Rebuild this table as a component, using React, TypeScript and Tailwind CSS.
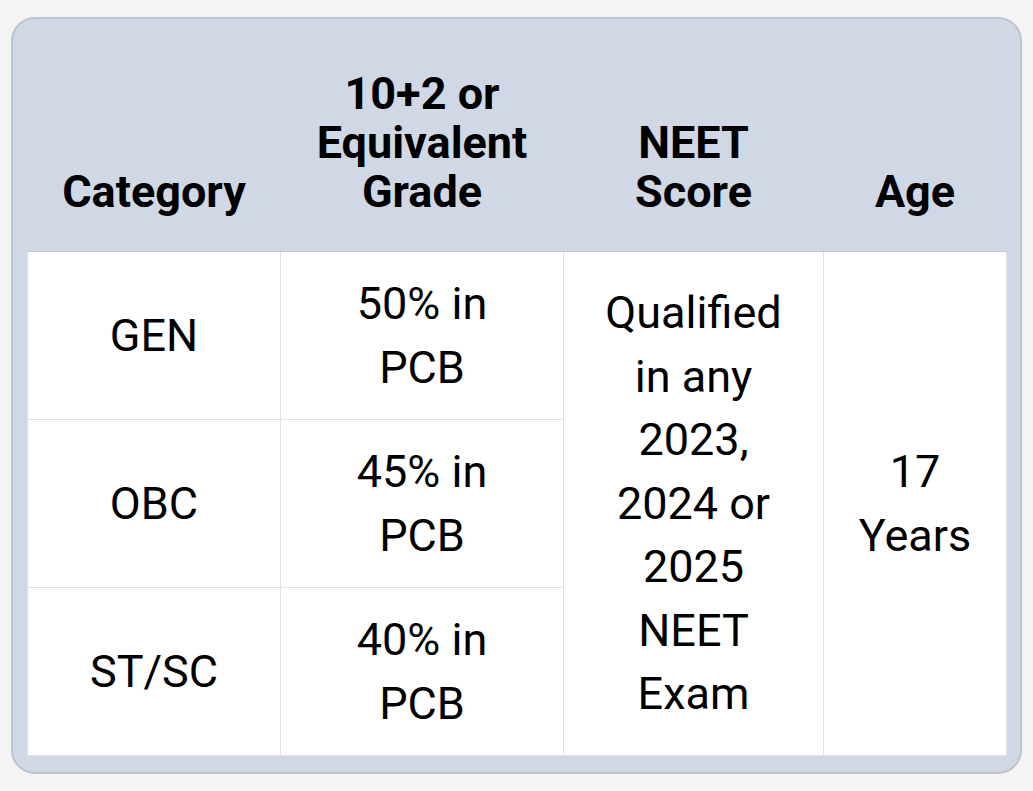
const rows = [
  { category: "GEN", grade: "50% in PCB" },
  { category: "OBC", grade: "45% in PCB" },
  { category: "ST/SC", grade: "40% in PCB" },
];

export default function App() {
  return (
    <div
      className="min-h-[791px] bg-[#f4f4f4] px-[11px] pt-[17px]"
      style={{ fontFamily: "Roboto, 'Noto Sans', sans-serif" }}
    >
      <div className="rounded-[24px] border-2 border-[#bcc4d0] bg-[#d0d8e5] px-[14px] pt-[14px] pb-[16px]">
        <table className="w-[979px] table-fixed border-collapse text-center text-[45px] text-black">
          <colgroup>
            <col className="w-[253px]" />
            <col className="w-[283px]" />
            <col className="w-[260px]" />
            <col className="w-[183px]" />
          </colgroup>
          <thead>
            <tr>
              {["Category", "10+2 or Equivalent Grade", "NEET Score", "Age"].map((h) => (
                <th
                  key={h}
                  className="border-b border-[#c3cad6] px-[32px] pt-[36px] pb-[35px] align-bottom font-bold leading-[49px]"
                >
                  {h}
                </th>
              ))}
            </tr>
          </thead>
          <tbody className="bg-white">
            {rows.map((r, i) => (
              <tr key={r.category}>
                <td className="border border-[#e2e2e2] px-[32px] py-[20px] align-middle leading-[63.5px]">
                  {r.category}
                </td>
                <td className="border border-[#e2e2e2] px-[32px] py-[20px] align-middle leading-[63.5px]">
                  {r.grade}
                </td>
                {i === 0 && (
                  <>
                    <td
                      rowSpan={3}
                      className="border border-[#e2e2e2] px-[32px] py-[20px] align-middle leading-[63.5px]"
                    >
                      Qualified in any 2023, 2024 or 2025 NEET Exam
                    </td>
                    <td
                      rowSpan={3}
                      className="border border-[#e2e2e2] px-[32px] py-[20px] align-middle leading-[63.5px]"
                    >
                      17 Years
                    </td>
                  </>
                )}
              </tr>
            ))}
          </tbody>
        </table>
      </div>
    </div>
  );
}
